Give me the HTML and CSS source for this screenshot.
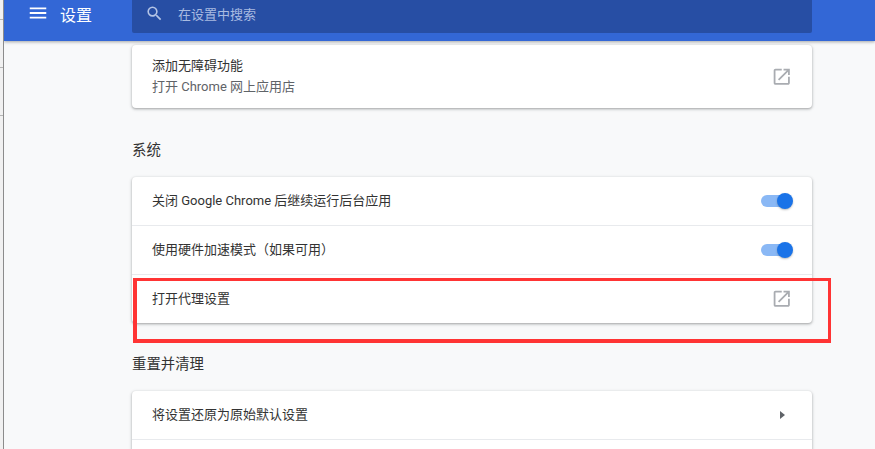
FILE: index.html
```html
<!DOCTYPE html>
<html lang="zh-CN">
<head>
  <meta charset="UTF-8">
  <title>设置</title>
  <link rel="stylesheet" href="styles.css">
</head>
<body>
  <div class="behind">
    <div class="behind-line"></div>
    <div class="behind-line"></div>
    <div class="behind-line"></div>
  </div>
  <div class="app">
    <header class="toolbar">
      <svg class="menu-icon" viewBox="0 0 24 24"><path d="M3 18h18v-2H3v2zm0-5h18v-2H3v2zm0-7v2h18V6H3z"/></svg>
      <div class="toolbar-title">设置</div>
      <div class="search">
        <svg class="search-icon" viewBox="0 0 24 24"><path d="M15.5 14h-.79l-.28-.27A6.47 6.47 0 0 0 16 9.5 6.5 6.5 0 1 0 9.5 16c1.61 0 3.09-.59 4.23-1.57l.27.28v.79l5 4.99L20.49 19l-4.99-5zm-6 0C7.01 14 5 11.99 5 9.5S7.01 5 9.5 5 14 7.01 14 9.5 11.99 14 9.5 14z"/></svg>
        <span class="search-text">在设置中搜索</span>
      </div>
    </header>

    <main class="content">
      <div class="card first-card">
        <div class="row tall">
          <div class="row-text">
            <div class="label">添加无障碍功能</div>
            <div class="sublabel">打开 Chrome 网上应用店</div>
          </div>
          <svg class="open-icon" viewBox="0 0 24 24"><path d="M19 19H5V5h7V3H5c-1.11 0-2 .9-2 2v14c0 1.1.89 2 2 2h14c1.1 0 2-.9 2-2v-7h-2v7zM14 3v2h3.59l-9.83 9.83 1.41 1.41L19 6.41V10h2V3h-7z"/></svg>
        </div>
      </div>

      <h2 class="section-title">系统</h2>
      <div class="card">
        <div class="row">
          <div class="row-text label">关闭 Google Chrome 后继续运行后台应用</div>
          <div class="toggle"><span class="knob"></span></div>
        </div>
        <div class="row">
          <div class="row-text label">使用硬件加速模式（如果可用）</div>
          <div class="toggle"><span class="knob"></span></div>
        </div>
        <div class="row proxy-row">
          <div class="row-text label">打开代理设置</div>
          <svg class="open-icon" viewBox="0 0 24 24"><path d="M19 19H5V5h7V3H5c-1.11 0-2 .9-2 2v14c0 1.1.89 2 2 2h14c1.1 0 2-.9 2-2v-7h-2v7zM14 3v2h3.59l-9.83 9.83 1.41 1.41L19 6.41V10h2V3h-7z"/></svg>
          <div class="red-box"></div>
        </div>
      </div>

      <h2 class="section-title">重置并清理</h2>
      <div class="card">
        <div class="row">
          <div class="row-text label">将设置还原为原始默认设置</div>
          <span class="arrow"></span>
        </div>
        <div class="row"></div>
      </div>
    </main>
  </div>
</body>
</html>
```

FILE: styles.css
```css
html, body {
  height: 100%;
  overflow: hidden;
}

body {
  margin: 0;
  display: flex;
  background-color: #f8f9fa;
  color: #202124;
  font-family: Roboto, 'Noto Sans CJK SC', sans-serif;
  font-size: 13px;
}

.behind {
  flex: none;
  width: 3px;
  padding-top: 19px;
  background-color: #f1f1f1;
  border-right: 1px solid #8c8c8c;
}

.behind-line {
  height: 1px;
  margin-bottom: 47px;
  background-color: #b5b5b5;
}

.app {
  flex: 1;
  min-width: 0;
  height: 100vh;
  overflow: hidden;
}

.toolbar {
  position: relative;
  z-index: 2;
  display: flex;
  align-items: center;
  height: 56px;
  margin-top: -15px;
  background-color: #3367d6;
  box-shadow: 0 1px 3px rgba(60, 64, 67, 0.45);
  color: #fff;
}

.menu-icon {
  width: 22px;
  height: 22px;
  margin-left: 23px;
  fill: #fff;
}

.toolbar-title {
  width: 72px;
  margin-left: 11px;
  padding-top: 2px;
  font-size: 16px;
}

.search {
  display: flex;
  align-items: center;
  width: 680px;
  height: 40px;
  border-radius: 2px;
  background-color: #274ea4;
}

.search-icon {
  width: 19px;
  height: 19px;
  margin-left: 13px;
  fill: #b4c4e6;
}

.search-text {
  margin-left: 14px;
  color: #a9bbe1;
}

.content {
  width: 680px;
  margin-left: 128px;
}

.first-card {
  margin-top: 4px;
}

.card {
  border-radius: 4px;
  background-color: #fff;
  box-shadow: 0 1px 2px rgba(60, 64, 67, 0.3), 0 1px 3px 1px rgba(60, 64, 67, 0.15);
}

.section-title {
  margin: 0;
  padding: 33px 0 16px;
  font-size: 14.4px;
  font-weight: 400;
  line-height: 20px;
  color: #333;
}

.section-title:nth-of-type(2) {
  padding-top: 32px;
}

.row {
  display: flex;
  align-items: center;
  justify-content: space-between;
  height: 48px;
  padding: 0 20px;
  border-top: 1px solid #e8eaed;
}

.row:first-child {
  border-top: none;
}

.row.tall {
  height: 63px;
}

.row-text {
  padding-bottom: 2px;
}

.label {
  line-height: 21px;
  color: #333;
}

.sublabel {
  line-height: 21px;
  color: #5f6368;
}

.open-icon {
  width: 21.5px;
  height: 21.5px;
  fill: #a9acb1;
}

.toggle {
  position: relative;
  width: 30px;
  height: 12px;
  margin-right: 1px;
  border-radius: 6px;
  background-color: #8ab8f5;
}

.knob {
  position: absolute;
  top: -2px;
  right: -2px;
  width: 16px;
  height: 16px;
  border-radius: 50%;
  background-color: #1a73e8;
  box-shadow: 0 1px 2px rgba(60, 64, 67, 0.35);
}

.arrow {
  width: 0;
  height: 0;
  margin-right: 7px;
  border-top: 4px solid transparent;
  border-bottom: 4px solid transparent;
  border-left: 5px solid #5f6368;
}

.proxy-row {
  position: relative;
}

/* annotation drawn over the screenshot */
.red-box {
  position: absolute;
  top: 3px;
  left: 1px;
  right: -19px;
  bottom: -20px;
  border: solid #ff3434;
  border-width: 3px 3px 4px 4px;
}
```
